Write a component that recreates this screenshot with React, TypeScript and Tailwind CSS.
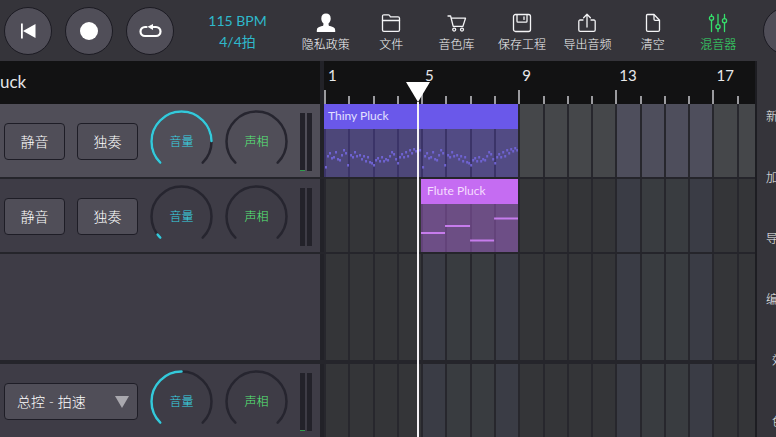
import type { ReactNode } from "react";
import clsx from "clsx";

const COLUMNS = Array.from({ length: 18 }, (_, i) => i);
const PLAYHEAD = 3.88;

type RowTone = "selected" | "normal";

const NAV = [
  { label: "隐私政策", icon: <PersonIcon /> },
  { label: "文件", icon: <FolderIcon /> },
  { label: "音色库", icon: <CartIcon /> },
  { label: "保存工程", icon: <SaveIcon /> },
  { label: "导出音频", icon: <ExportIcon /> },
  { label: "清空", icon: <PageIcon /> },
  { label: "混音器", icon: <MixerIcon />, active: true },
];

const SIDE_ITEMS = [
  { label: "新" },
  { label: "加" },
  { label: "导" },
  { label: "编" },
  { label: "效", short: true },
  { label: "色", short: true },
];

function Icon({ children }: { children: ReactNode }) {
  return (
    <svg viewBox="0 0 20 20" className="size-5" fill="none" stroke="currentColor" strokeWidth="1.3" strokeLinejoin="round" strokeLinecap="round" aria-hidden="true">
      {children}
    </svg>
  );
}

function PersonIcon() {
  return (
    <Icon>
      <path
        d="M10 .6c2.900 0 4.700 1.900 4.700 4.800 0 2.100-.8 3.700-2.100 4.800v1.500c0 .8.500 1.100 1.400 1.400 3.200.9 5.200 1.700 5.200 4.200V19H.8v-1.700c0-2.500 2-3.300 5.200-4.200.9-.3 1.400-.6 1.400-1.400v-1.500C6.100 9.100 5.300 7.500 5.300 5.400 5.300 2.500 7.100.6 10 .6z"
        fill="#fff"
        stroke="none"
      />
    </Icon>
  );
}

function FolderIcon() {
  return (
    <Icon>
      <path d="M1.500 17V3.200c0-.9.500-1.400 1.400-1.400h4.400c.6 0 1 .2 1.300.7l.8 1.300h7.700c.9 0 1.400.5 1.400 1.400V17c0 .9-.5 1.400-1.400 1.400H2.900c-.9 0-1.400-.5-1.400-1.400z" />
      <path d="M1.500 7.500h17" />
    </Icon>
  );
}

function CartIcon() {
  return (
    <Icon>
      <path d="M1 3h2.600l2.600 10.400h9.600M4.300 5.200h14.200l-2.600 8.200" />
      <circle cx="7.200" cy="16.600" r="1.500" />
      <circle cx="15" cy="16.600" r="1.500" />
    </Icon>
  );
}

function SaveIcon() {
  return (
    <Icon>
      <rect x="1.500" y="1.500" width="17" height="17" rx="2" />
      <path d="M5 1.800v6.400c0 .6.300.9.900.9h8.200c.6 0 .9-.3.9-.9V1.800M12 3.800v2.600" />
    </Icon>
  );
}

function ExportIcon() {
  return (
    <Icon>
      <path d="M6 7H3.200c-.9 0-1.400.5-1.400 1.400V17c0 .9.500 1.400 1.400 1.400h13.600c.9 0 1.400-.5 1.400-1.400V8.400c0-.9-.5-1.400-1.400-1.400H14M10 14V1.500M6.600 4.700 10 1.300l3.400 3.400" />
    </Icon>
  );
}

function PageIcon() {
  return (
    <Icon>
      <path d="M4.500 1.500H11l5.500 5.800v9.700c0 .9-.5 1.400-1.400 1.400H4.900c-.9 0-1.400-.5-1.400-1.400V2.500c0-.6.400-1 1-1z" />
      <path d="M11 1.800v4.400c0 .8.300 1.100 1.100 1.100h4.200" />
    </Icon>
  );
}

function MixerIcon() {
  return (
    <Icon>
      <path d="M3.500 1.500v1.800M3.500 7.500v11M10 1.500v10M10 16v2.500M16.500 1.500v4M16.500 10v8.500" />
      <circle cx="3.500" cy="5.300" r="2.100" />
      <circle cx="10" cy="13.700" r="2.100" />
      <circle cx="16.500" cy="7.700" r="2.100" />
    </Icon>
  );
}

function RoundButton({ label, children }: { label: string; children?: ReactNode }) {
  return (
    <button
      aria-label={label}
      className="flex size-12 shrink-0 items-center justify-center rounded-full border border-[#1c1b23] bg-[#504e58] text-white"
    >
      {children}
    </button>
  );
}

function Header() {
  return (
    <header className="flex h-[61px] shrink-0 items-center overflow-hidden pl-1">
      <div className="flex shrink-0 gap-[13px]">
        <RoundButton label="Rewind">
          <svg viewBox="0 0 16 16" className="size-4" fill="currentColor" aria-hidden="true">
            <path d="M1 .5h1.800v15H1zM15.500 1v14L3 8z" />
          </svg>
        </RoundButton>
        <RoundButton label="Record">
          <span className="size-[18px] rounded-full bg-white" />
        </RoundButton>
        <RoundButton label="Loop">
          <svg viewBox="0 0 24 16" className="h-4 w-6" aria-hidden="true">
            <path d="M8.500 4H7a4.500 4.500 0 0 0 0 9h11a4.500 4.500 0 0 0 0-9h-2.500" fill="none" stroke="currentColor" strokeWidth="2.200" strokeLinecap="round" />
            <path d="M9.500 3.800 15 1v6z" fill="currentColor" />
          </svg>
        </RoundButton>
      </div>
      <div className="ml-2 flex w-[111px] shrink-0 flex-col items-center text-sm leading-[21px] font-normal text-[#2fb9cb]">
        <span>115 BPM</span>
        <span>4/4拍</span>
      </div>
      <nav className="flex min-w-0 flex-1 pt-1">
        {NAV.map((item) => (
          <button
            key={item.label}
            className={clsx(
              "flex flex-1 basis-0 flex-col items-center gap-1 text-xs leading-4 whitespace-nowrap",
              item.active ? "text-[#35e06c]" : "text-[#f4f4f6]",
            )}
          >
            {item.icon}
            {item.label}
          </button>
        ))}
      </nav>
      <div className="flex w-[25px] shrink-0 overflow-hidden pl-3">
        <RoundButton label="More" />
      </div>
    </header>
  );
}

// 270 degree dial, open at the bottom
function Knob({ label, value = 0, color }: { label: string; value?: number; color: string }) {
  const arc = "M10.300 52.700A30 30 0 1 1 52.700 52.700";
  return (
    <div className="grid size-[63px] shrink-0 place-items-center">
      <svg viewBox="0 0 63 63" className="col-start-1 row-start-1 size-full" fill="none" strokeWidth="2.500" strokeLinecap="round" aria-hidden="true">
        <path d={arc} stroke="#26252f" />
        {value > 0 && <path d={arc} stroke="#35c9da" pathLength={100} strokeDasharray={`${value} 200`} />}
      </svg>
      <span className={clsx("col-start-1 row-start-1 text-xs", color)}>{label}</span>
    </div>
  );
}

function Meter({ signal }: { signal?: boolean }) {
  return (
    <div className="flex h-[58px] gap-0.5">
      <div className="flex w-[5px] flex-col justify-end bg-[#23222a]">
        {signal && <div className="h-px bg-[#2f9f4c]" />}
      </div>
      <div className="w-[5px] bg-[#23222a]" />
    </div>
  );
}

function Controls({ volume, signal, children, className }: { volume: number; signal?: boolean; children: ReactNode; className?: string }) {
  return (
    <div className={clsx("flex w-80 shrink-0 items-center gap-3 pt-0.5 pl-1", className)}>
      {children}
      <Knob label="音量" value={volume} color="text-[#3ad3e4]" />
      <Knob label="声相" color="text-[#58ea78]" />
      <Meter signal={signal} />
    </div>
  );
}

function TrackButton({ children }: { children: ReactNode }) {
  return (
    <button className="h-[37px] w-[61px] shrink-0 rounded border border-[#1e1d26] bg-[#504e58] text-sm text-white">
      {children}
    </button>
  );
}

function cellColor(col: number, tone: RowTone) {
  const blue = Math.floor(col / 4) % 2 === 1;
  if (tone === "selected") return blue ? "bg-[#4e4e5c]" : "bg-[#45474a]";
  if (!blue) return "bg-[#343538]";
  return col % 4 === 1 || col % 4 === 2 ? "bg-[#393c40]" : "bg-[#3a3c45]";
}

function Lane({ tone = "normal", children }: { tone?: RowTone; children?: ReactNode }) {
  return (
    <div className="min-w-0 flex-1 overflow-hidden">
      <div className="grid h-full w-[437px] min-w-full grid-cols-18">
        {COLUMNS.map((col) => (
          <div
            key={col}
            style={{ gridColumnStart: col + 1 }}
            className={clsx("row-start-1 border-l-2 border-[#27272d]", cellColor(col, tone))}
          />
        ))}
        {children}
      </div>
    </div>
  );
}

const PLUCK_NOTES = [
  [1, 37], [3, 26], [5, 23], [7, 28], [9, 27], [11, 22], [13, 29], [15, 30], [17, 25], [19, 20], [21, 23], [23, 35],
  [26, 25], [28, 27], [30, 22], [32, 26], [35, 25], [37, 29], [39, 26], [41, 31], [43, 27], [45, 32], [47, 33], [49, 35],
  [51, 30], [53, 28], [55, 31], [57, 27], [59, 31], [61, 29], [63, 30], [65, 26], [67, 22], [69, 24], [71, 29], [73, 33],
  [75, 27], [77, 24], [79, 27], [81, 22], [83, 26], [85, 20], [87, 23], [89, 19], [91, 21], [93, 18], [95, 20],
];

function PluckClip() {
  return (
    <div className="z-10 col-span-8 col-start-1 row-start-1 flex flex-col">
      <div className="h-[25px] bg-[#6a58ea] pl-1 text-xs leading-6 font-normal text-[#e4e0ff]">Thiny Pluck</div>
      <svg viewBox="0 0 194 48" preserveAspectRatio="none" className="min-h-0 w-full flex-1 bg-[#5a48c0]/40" aria-hidden="true">
        {[0, 97].map((shift) =>
          PLUCK_NOTES.map(([x, y]) => (
            <rect key={`${shift}-${x}`} x={x + shift} y={y} width="2" height="2.500" fill="#6f63d2" />
          )),
        )}
      </svg>
    </div>
  );
}

function FluteClip() {
  return (
    <div className="z-10 col-span-4 col-start-5 row-start-1 flex flex-col">
      <div className="h-[25px] bg-[#c56cf2] pl-1.5 text-xs leading-6 font-normal text-[#f6dcff]">Flute Pluck</div>
      <svg viewBox="0 0 97 48" preserveAspectRatio="none" className="min-h-0 w-full flex-1 bg-[#a060c8]/50" aria-hidden="true">
        <path d="M0 29h24M24 22h25M49 36.500h24M73 14.500h24" stroke="#c67cec" strokeWidth="2" />
      </svg>
    </div>
  );
}

function Ruler() {
  return (
    <div className="flex h-[43px] shrink-0 bg-[#121213] font-normal">
      <div className="w-80 shrink-0 text-[17px] leading-[42px] text-[#e4e4e6]">uck</div>
      <div className="w-1 shrink-0 bg-[#222228]" />
      <div className="min-w-0 flex-1 overflow-hidden">
        <div className="grid h-full w-[437px] min-w-full grid-cols-18 items-end">
          {COLUMNS.map((col) => {
            const major = col % 4 === 0;
            return (
              <div key={col} className="flex h-full flex-col justify-between">
                <span className="h-7 pl-1 text-[15px] leading-7 text-[#e8e8ea]">{major && col + 1}</span>
                <span className={clsx("w-0.5 shrink-0 bg-[#9a9a9e]", major ? "h-3.5" : "h-2")} />
              </div>
            );
          })}
        </div>
      </div>
    </div>
  );
}

function Row({ className, controls, children }: { className: string; controls: ReactNode; children: ReactNode }) {
  return (
    <div className={clsx("flex border-[#25252b]", className)}>
      {controls}
      <div className="w-1 shrink-0 bg-[#222228]" />
      {children}
    </div>
  );
}

export default function App() {
  return (
    <div className="flex h-screen flex-col overflow-hidden bg-[#35343a] font-['Lato','Noto_Sans_CJK_SC',sans-serif] font-light">
      <Header />
      <div className="flex min-h-0 flex-1">
        <main className="relative flex min-w-0 flex-1 flex-col border-r-2 border-[#1d1d22]">
          <Ruler />
          <Row
            className="h-[75px] shrink-0 border-b-2"
            controls={
              <Controls volume={83} signal className="bg-[#504e58]">
                <TrackButton>静音</TrackButton>
                <TrackButton>独奏</TrackButton>
              </Controls>
            }
          >
            <Lane tone="selected">
              <PluckClip />
            </Lane>
          </Row>
          <Row
            className="h-[75px] shrink-0 border-b-2"
            controls={
              <Controls volume={3} className="bg-[#3e3c46]">
                <TrackButton>静音</TrackButton>
                <TrackButton>独奏</TrackButton>
              </Controls>
            }
          >
            <Lane>
              <FluteClip />
            </Lane>
          </Row>
          <Row className="min-h-0 flex-1" controls={<div className="w-80 shrink-0 bg-[#3e3c46]" />}>
            <Lane />
          </Row>
          <Row
            className="h-[77px] shrink-0 border-t-4"
            controls={
              <Controls volume={50} signal className="bg-[#3e3c46]">
                <button className="flex h-[37px] w-[134px] shrink-0 items-center justify-between rounded border border-[#1e1d26] bg-[#504e58] pr-2 pl-3 text-sm text-white">
                  总控 - 拍速
                  <svg viewBox="0 0 14 12" className="h-3 w-3.5" fill="#a9a8ae" aria-hidden="true">
                    <path d="M0 0h14L7 12z" />
                  </svg>
                </button>
              </Controls>
            }
          >
            <Lane />
          </Row>
          {/* Playhead runs over the ruler and every lane */}
          <div className="pointer-events-none absolute inset-y-0 right-0 left-[324px] z-20 overflow-hidden">
            <div className="h-full w-[437px] min-w-full">
              <div className="flex h-full w-6 -translate-x-1/2 flex-col items-center pt-[21px] text-white" style={{ marginLeft: `${(PLAYHEAD / 18) * 100}%` }}>
                <svg viewBox="0 0 24 20" className="h-5 w-6 shrink-0" fill="currentColor" aria-hidden="true">
                  <path d="M0 0h24L12 20z" />
                </svg>
                <div className="w-0.5 flex-1 bg-[#f4f2f6]" />
              </div>
            </div>
          </div>
        </main>
        <aside className="flex w-[19px] shrink-0 flex-col overflow-hidden pt-[25px] text-xs text-[#f4f4f6]">
          {SIDE_ITEMS.map((item) => (
            <button key={item.label} className={clsx("flex h-[61px] shrink-0 items-center", item.short ? "pl-[15px]" : "pl-[9px]")}>
              <span className="shrink-0">{item.label}</span>
            </button>
          ))}
        </aside>
      </div>
    </div>
  );
}
